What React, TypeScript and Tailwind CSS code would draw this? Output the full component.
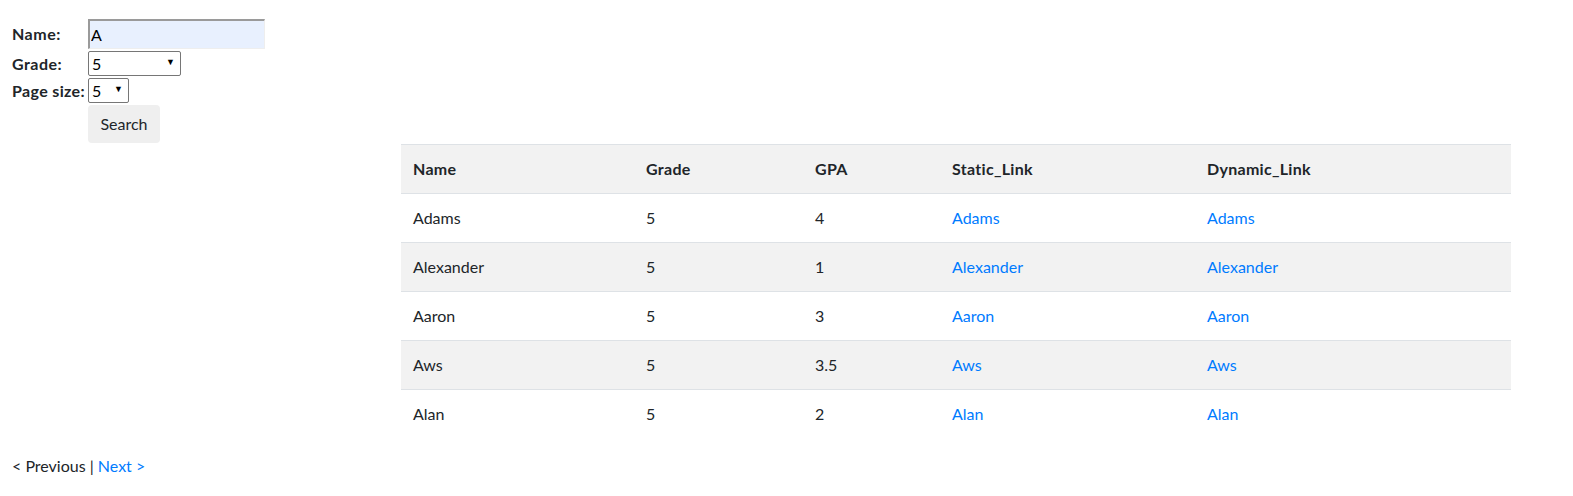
import React from "react";

const rows = [
  { name: "Adams", grade: "5", gpa: "4" },
  { name: "Alexander", grade: "5", gpa: "1" },
  { name: "Aaron", grade: "5", gpa: "3" },
  { name: "Aws", grade: "5", gpa: "3.5" },
  { name: "Alan", grade: "5", gpa: "2" },
];

function Select({ value, width }: { value: string; width: string }) {
  return (
    <div className={`relative h-[25px] ${width}`}>
      <select
        defaultValue={value}
        className="appearance-none w-full h-full border border-[#767676] rounded-[2px] bg-white pl-[3px] text-[16px] leading-[23px] text-black outline-none"
      >
        <option value={value}>{value}</option>
      </select>
      <span className="pointer-events-none absolute right-[6px] top-[5px] text-[9px] leading-[12px] text-black">▼</span>
    </div>
  );
}

export default function App() {
  return (
    <div
      className="bg-white text-[#212529] w-[1573px] h-[496px] overflow-hidden"
      style={{ fontFamily: '"Segoe UI", Lato, "Noto Sans", sans-serif' }}
    >
      <div className="pt-[19px] pl-[12px] grid grid-cols-[76px_auto] gap-y-[2px] justify-start items-center text-[16px]">
        <div className="font-bold leading-[20px] tracking-[0.5px]">Name:</div>
        <input
          defaultValue="A"
          className="w-[177px] h-[30px] bg-[#e8f0fe] border-t-2 border-l-2 border-b border-r border-t-[#9a9a9a] border-l-[#9a9a9a] border-b-[#eeeeee] border-r-[#eeeeee] pl-[1px] text-[16px] text-black outline-none"
        />
        <div className="font-bold leading-[20px] tracking-[0.5px]">Grade:</div>
        <Select value="5" width="w-[93px]" />
        <div className="font-bold leading-[20px] tracking-[0.35px] whitespace-nowrap">Page size:</div>
        <Select value="5" width="w-[41px]" />
        <div />
        <button className="w-[72px] h-[38px] rounded-[4px] bg-[#efefef] text-[16px] text-[#212529]">
          Search
        </button>
      </div>

      <div className="ml-[401px] mt-[1px] w-[1110px]">
        <table className="w-full border-collapse text-[16px]">
          <thead>
            <tr className="bg-[#f2f2f2] border-t border-[#dee2e6]">
              <th className="w-[233px] text-left px-[12px] py-[12px] leading-[24px] font-bold tracking-[0.3px]">Name</th>
              <th className="w-[169px] text-left px-[12px] py-[12px] leading-[24px] font-bold tracking-[0.3px]">Grade</th>
              <th className="w-[137px] text-left px-[12px] py-[12px] leading-[24px] font-bold tracking-[0.3px]">GPA</th>
              <th className="w-[255px] text-left px-[12px] py-[12px] leading-[24px] font-bold tracking-[0.3px]">Static_Link</th>
              <th className="text-left px-[12px] py-[12px] leading-[24px] font-bold tracking-[0.3px]">Dynamic_Link</th>
            </tr>
          </thead>
          <tbody>
            {rows.map((r, i) => (
              <tr key={r.name} className={`border-t border-[#dee2e6] ${i % 2 === 1 ? "bg-[#f2f2f2]" : "bg-white"}`}>
                <td className="px-[12px] py-[12px] leading-[24px]">{r.name}</td>
                <td className="px-[12px] py-[12px] leading-[24px]">{r.grade}</td>
                <td className="px-[12px] py-[12px] leading-[24px]">{r.gpa}</td>
                <td className="px-[12px] py-[12px] leading-[24px]">
                  <a href="#" className="text-[#007bff]">{r.name}</a>
                </td>
                <td className="px-[12px] py-[12px] leading-[24px]">
                  <a href="#" className="text-[#007bff]">{r.name}</a>
                </td>
              </tr>
            ))}
          </tbody>
        </table>
      </div>

      <div className="pl-[12px] mt-[16px] text-[16px] leading-[24px]">
        <span>&lt; Previous</span> | <a href="#" className="text-[#007bff]">Next &gt;</a>
      </div>
    </div>
  );
}
